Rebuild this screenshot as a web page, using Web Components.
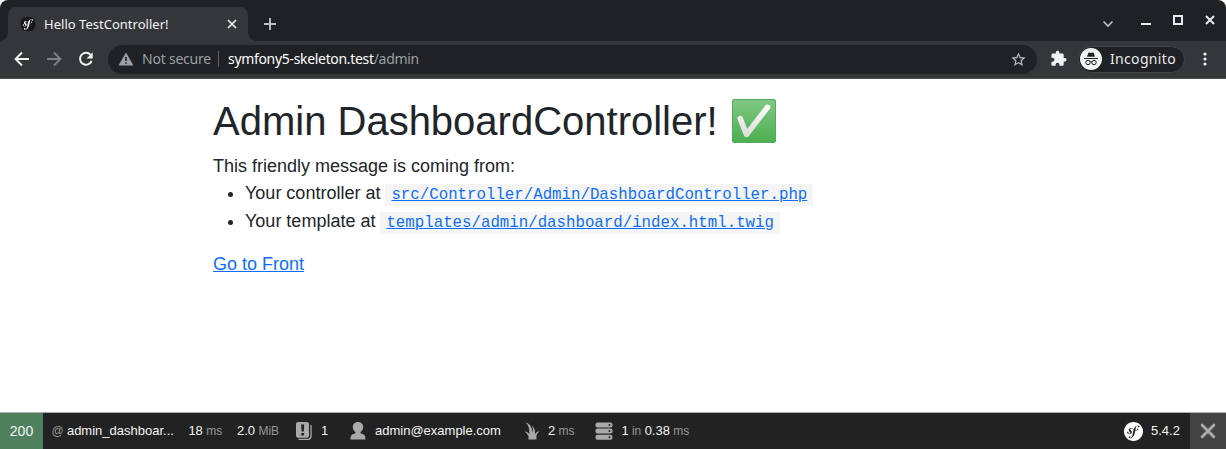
<!DOCTYPE html>
<html lang="en">
<head>
<meta charset="utf-8">
<title>Hello TestController!</title>
<style>
html,body{margin:0;height:100%;overflow:hidden;background:#fff}
</style>
</head>
<body>
<app-window></app-window>
<script>
const define = (name, html) => customElements.define(name, class extends HTMLElement {
  constructor() {
    super();
    const t = document.createElement('template');
    t.innerHTML = html;
    this.attachShadow({ mode: 'open' }).append(t.content.cloneNode(true));
  }
});

const SF = 'M24 12c0 6.628-5.372 12-12 12S0 18.628 0 12 5.372 0 12 0s12 5.372 12 12zm-6.753-7.561c-1.22.042-2.283.715-3.075 1.644-.878 1.02-1.461 2.229-1.881 3.461-.753-.614-1.332-1.414-2.539-1.761-.966-.297-2.015-.105-2.813.514-.41.319-.71.757-.861 1.254-.36 1.176.381 2.225.719 2.6l.737.79c.15.154.519.56.339 1.138-.193.631-.951 1.037-1.732.799-.348-.106-.848-.366-.734-.73.045-.15.152-.263.21-.391.052-.11.077-.194.095-.242.141-.465-.053-1.07-.551-1.223-.465-.143-.939-.03-1.125.566-.209.68.117 1.913 1.86 2.449 2.04.628 3.765-.484 4.009-1.932.153-.907-.255-1.582-1.006-2.447l-.612-.677c-.371-.37-.497-1.002-.114-1.485.324-.409.785-.584 1.539-.379 1.103.3 1.594 1.063 2.412 1.68-.338 1.11-.56 2.223-.759 3.222l-.123.746c-.585 3.07-1.033 4.757-2.194 5.726-.234.166-.57.416-1.073.434-.266.005-.352-.176-.355-.257-.006-.184.15-.271.255-.353.154-.083.39-.224.372-.674-.016-.532-.456-.994-1.094-.973-.477.017-1.203.465-1.176 1.286.028.85.819 1.485 2.012 1.444.638-.021 2.062-.281 3.464-1.949 1.633-1.911 2.09-4.101 2.434-5.706l.383-2.116c.213.024.441.042.69.048 2.032.044 3.049-1.01 3.064-1.776.01-.464-.304-.921-.744-.91-.386.009-.718.278-.806.654-.094.428.646.813.068 1.189-.41.266-1.146.452-2.184.3l.188-1.042c.386-1.976.859-4.407 2.661-4.467.132-.007.612.006.623.323.003.105-.022.134-.147.375-.115.155-.174.345-.168.537.017.504.403.836.957.816.743-.023.955-.748.945-1.119-.032-.874-.952-1.424-2.17-1.386z';

/* Symfony mark: --disc colours the circle, --mark the letters */
define('sf-logo', `<style>
:host{display:block;flex:none;width:var(--size,16px);height:var(--size,16px)}svg{display:block;width:100%;height:100%}
</style><svg viewBox="0 0 24 24"><circle cx="12" cy="12" r="11.5" fill="var(--mark)"/><path d="${SF}" fill="var(--disc)"/></svg>`);

define('tab-strip', `<style>
:host{display:flex;height:41px;background:#202124;border-radius:8px 8px 0 0;box-sizing:border-box;align-items:flex-end}
.foot{width:8px;height:8px;flex:none}
.l{background:radial-gradient(circle at 0 0,#202124 7.5px,#35363a 8px)}
.r{background:radial-gradient(circle at 100% 0,#202124 7.5px,#35363a 8px)}
.tab{width:240px;height:34px;box-sizing:border-box;background:#35363a;border-radius:8px 8px 0 0;display:flex;align-items:center;padding:0 10px 0 12px;--size:16px;--disc:#18171b;--mark:#fff}
.title{margin-left:8px;font:13px/18px "Noto Sans",sans-serif;letter-spacing:.02px;color:#f1f3f4;white-space:nowrap;flex:1}
svg{display:block;flex:none}
.plus{margin:0 0 10px 6px}
.gap{flex:1}
.controls{display:flex;align-self:stretch}
</style>
<div class="foot l"></div>
<div class="tab"><sf-logo></sf-logo><span class="title">Hello TestController!</span>
<svg width="12" height="12" viewBox="0 0 12 12"><path d="M2 2l8 8M10 2l-8 8" stroke="#f1f3f4" stroke-width="1.7"/></svg></div>
<div class="foot r"></div>
<svg class="plus" width="16" height="14" viewBox="0 0 16 14"><path d="M8 1v12M2 7h12" stroke="#bdc1c6" stroke-width="1.9"/></svg>
<div class="gap"></div>
<svg class="controls" width="128" height="41" viewBox="1098 0 128 41" fill="none"><path d="M1103.5 21.5l4.5 4.5 4.5-4.5" stroke="#bdc1c6" stroke-width="1.6"/><path d="M1141 24h10" stroke="#e8eaed" stroke-width="2"/><path d="M1174 16h8v8h-8z" stroke="#e8eaed" stroke-width="2"/><path d="M1206 16l8 8M1214 16l-8 8" stroke="#e8eaed" stroke-width="2"/></svg>`);

define('address-bar', `<style>
:host{display:flex;height:38px;box-sizing:border-box;background:#35363a;border-bottom:1px solid #505154;align-items:center;padding:0 10px 1px 12px;font:14px/20px "Noto Sans",sans-serif;color:#e8eaed;white-space:nowrap}
svg{display:block;flex:none}
.nav{display:flex;gap:12px}
.field{display:flex;align-items:center;box-sizing:border-box;width:929px;height:29px;border-radius:15px;background:#202124;margin-left:12px;padding:0 10px 0 10px}
.sec{color:#9aa0a6;margin-left:8px;width:69px;letter-spacing:-.22px}
.bar{width:1px;height:16px;background:#5f6368;margin:0 9px 0 7px}
.url{flex:1;color:#fff;letter-spacing:-.32px}
.url span{color:#9aa0a6}
.ext{margin-left:13px}
.incog{display:flex;align-items:center;box-sizing:border-box;width:107px;height:27px;border:1px solid #424347;border-radius:14px;background:#202124;margin-left:10px;padding-left:1px;letter-spacing:.33px}
.incog span{margin-left:8px}
.dots{margin-left:18px}
</style>
<div class="nav">
<svg width="20" height="20" viewBox="0 0 20 20" fill="none" stroke="#f1f3f4" stroke-width="1.9"><path d="M17 10H4M10 3.5L3.6 10l6.4 6.5"/></svg>
<svg width="20" height="20" viewBox="0 0 20 20" fill="none" stroke="#7e8084" stroke-width="1.9"><path d="M3 10h13M10 3.5l6.4 6.5-6.4 6.5"/></svg>
<svg width="20" height="20" viewBox="0 0 20 20"><path d="M14.4 5.6A6 6 0 1 0 15.6 12" fill="none" stroke="#f1f3f4" stroke-width="2"/><path d="M16.700 3.300v6.200h-6.200z" fill="#f1f3f4"/></svg>
</div>
<div class="field">
<svg width="16" height="14" viewBox="0 0 16 14"><path d="M8 .5L15.5 13.5H.5z" fill="#9aa0a6"/><path d="M7.2 5h1.6v4H7.2zM7.2 10.2h1.6v1.6H7.2z" fill="#202124"/></svg>
<span class="sec">Not secure</span><div class="bar"></div>
<span class="url">symfony5-skeleton.test<span>/admin</span></span>
<svg width="17" height="17" viewBox="0 0 24 24"><path fill="#bdc1c6" d="M22 9.24l-7.19-.62L12 2 9.19 8.63 2 9.24l5.46 4.73L5.82 21 12 17.27 18.18 21l-1.63-7.03L22 9.24zM12 15.4l-3.76 2.27 1-4.28-3.32-2.88 4.38-.38L12 6.1l1.71 4.04 4.38.38-3.32 2.88 1 4.28L12 15.4z"/></svg>
</div>
<svg class="ext" width="18" height="18" viewBox="0 0 25 25"><path fill="#f1f3f4" d="M20.5 11H19V7c0-1.1-.9-2-2-2h-4V3.5a2.500 2.500 0 0 0-5 0V5H4c-1.100 0-1.990.9-1.990 2v3.800H3.500c1.490 0 2.700 1.210 2.700 2.700s-1.210 2.700-2.700 2.700H2V20c0 1.100.9 2 2 2h3.800v-1.500c0-1.490 1.210-2.700 2.700-2.700s2.700 1.210 2.700 2.700V22H17c1.100 0 2-.9 2-2v-4h1.500a2.500 2.500 0 0 0 0-5z"/></svg>
<div class="incog"><svg width="22" height="22" viewBox="0 0 22 22"><circle cx="11" cy="11" r="11" fill="#f1f3f4"/><path d="M7 8.700l1.300-3.700q.2-.6.8-.4l1.900.5 1.900-.5q.6-.2.8.4L15 8.700z" fill="#202124"/><path d="M4 10.500h14" stroke="#202124" stroke-width="1"/><g fill="none" stroke="#202124" stroke-width="1"><circle cx="8" cy="14.500" r="2.200"/><circle cx="14" cy="14.500" r="2.200"/><path d="M10.200 14q.8-.5 1.600 0"/></g></svg><span>Incognito</span></div>
<svg class="dots" width="4" height="16" viewBox="0 0 4 16" fill="#f1f3f4"><circle cx="2" cy="3" r="1.600"/><circle cx="2" cy="8" r="1.600"/><circle cx="2" cy="13" r="1.600"/></svg>`);

define('code-link', `<style>
:host{display:inline;font:15.75px "Liberation Mono",monospace;background:#f5f5f5;padding:2px 6px}
a{color:#0d6efd;text-decoration:underline}
</style><a href="#"><slot></slot></a>`);

define('page-content', `<style>
:host{display:block;width:800px;margin:0 auto;font:18px/27px "Liberation Sans",Arial,sans-serif;color:#212529;flex:1}
h1{font-size:40px;line-height:48px;font-weight:400;margin:18px 0 8px;display:flex;align-items:center;white-space:pre}
h1 svg{margin-left:12px}
ul{margin:0 0 15px;padding-left:32px}
li{height:28px;line-height:27px;white-space:nowrap}
p{margin:0}
a{color:#0d6efd}
</style>
<h1>Admin DashboardController!<svg role="img" aria-label="check" width="48" height="48" viewBox="0 0 48 48"><defs><linearGradient id="g" x1="0" y1="0" x2="0" y2="1"><stop offset="0" stop-color="#81c784"/><stop offset="1" stop-color="#4caf50"/></linearGradient><linearGradient id="w" x1="0" y1="0" x2="0" y2="1"><stop offset="0" stop-color="#fafafa"/><stop offset="1" stop-color="#dedede"/></linearGradient></defs><rect x="2.500" y="2.500" width="43" height="43" rx="1.500" fill="url(#g)" stroke="#58a95d"/><path d="M10.200 21.500L16.500 37.500 37.500 10.300" fill="none" stroke="url(#w)" stroke-width="5.500" stroke-linecap="round" stroke-linejoin="round"/></svg></h1>
<p>This friendly message is coming from:</p>
<ul><li>Your controller at <code-link>src/Controller/Admin/DashboardController.php</code-link></li>
<li>Your template at <code-link>templates/admin/dashboard/index.html.twig</code-link></li></ul>
<p><a href="#">Go to Front</a></p>`);

define('debug-item', `<style>
:host{display:flex;align-items:center;flex:none;box-sizing:border-box}
</style><slot></slot>`);

define('debug-toolbar', `<style>
:host{display:flex;height:37px;box-sizing:border-box;border-top:1px solid #b0b0b0;background:#222;color:#f5f5f5;font:13px/36px "Liberation Sans",Arial,sans-serif;white-space:pre}
.status{width:43px;background:#4f805d;justify-content:center;font-size:14px}
i{font-style:normal;color:#999}
.s{font-size:12px}
svg{display:block;flex:none}
.gap{flex:1}
.close{width:36px;background:#444;justify-content:center}
</style>
<debug-item class="status">200</debug-item>
<debug-item style="width:145.400px;padding-left:8.400px"><i class="s">@ </i>admin_dashboar...</debug-item>
<debug-item style="width:48.600px">18<i class="s"> ms</i></debug-item>
<debug-item style="width:58px">2.0<i class="s"> MiB</i></debug-item>
<debug-item style="width:54px"><svg width="18" height="20" viewBox="0 0 18 20"><path d="M3.500 18.300h9.500q3 0 3-3V4" fill="none" stroke="#aaa" stroke-width="1.300"/><rect x="1" y="1" width="13" height="15.800" rx="2" fill="#aaa"/><path d="M6.200 3.500h3l-.4 7H6.600zM6.300 12h2.800v2.500H6.300z" fill="#222"/></svg><span style="margin-left:8px">1</span></debug-item>
<debug-item style="width:174px"><svg width="18" height="20" viewBox="0 0 18 20"><path fill="#aaa" d="M9 1c3.200 0 5.200 2.200 5.200 5 0 2-.9 3.600-2.400 4.900-.6.600-.5 1.200.3 1.500l2.200.9c1.600.7 2.200 2.300 2.200 5.200h-15c0-2.900.6-4.500 2.200-5.200l2.200-.9c.8-.3.9-.9.3-1.500C4.700 9.600 3.800 8 3.800 6c0-2.800 2-5 5.200-5z"/></svg><span style="margin-left:8px">admin@example.com</span></debug-item>
<debug-item style="width:72px"><svg width="18" height="20" viewBox="0 0 18 20"><path fill="#aaa" d="M5.500 18.500v-3.600Q4 12 1.300 10.300q3 .3 5 2.700C6.700 8 5.500 4 2.500 1.200 7.500 2.800 9.300 7 9.700 12.300 10.400 9.500 10 7 8.800 4.500c2.900 2.400 3.500 5.400 3.200 8.800 1-2.200 2.400-3.100 4.700-3.100-2 1.100-3 2.800-3.200 4.700v3.600z"/></svg><span style="margin-left:7px">2<i class="s"> ms</i></span></debug-item>
<debug-item><svg width="18" height="20" viewBox="0 0 18 20"><g fill="#aaa"><rect x=".5" y="1.500" width="17" height="5" rx="2"/><rect x=".5" y="7.600" width="17" height="5" rx="2"/><rect x=".5" y="13.700" width="17" height="5" rx="2"/></g><g fill="#222"><circle cx="14.500" cy="4" r="1"/><circle cx="14.500" cy="10.100" r="1"/><circle cx="14.500" cy="16.200" r="1"/></g></svg><span style="margin-left:8.400px">1<i class="s"> in </i>0.38<i class="s"> ms</i></span></debug-item>
<div class="gap"></div>
<debug-item style="--size:19px;--disc:#fff;--mark:#222;width:66px"><sf-logo></sf-logo><span style="margin-left:8px">5.4.2</span></debug-item>
<debug-item class="close"><svg width="16" height="16" viewBox="0 0 16 16"><path d="M2.200 2.200l11.600 11.600M13.800 2.200L2.200 13.800" stroke="#aaa" stroke-width="3" stroke-linecap="round"/></svg></debug-item>`);

define('app-window', `<style>:host{display:flex;flex-direction:column;height:449px;width:1226px}</style>
<tab-strip></tab-strip><address-bar></address-bar><page-content></page-content><debug-toolbar></debug-toolbar>`);
</script>
</body>
</html>
